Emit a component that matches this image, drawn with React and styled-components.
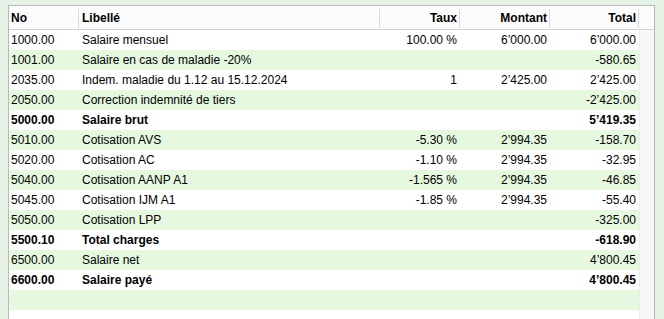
import styled, { createGlobalStyle } from "styled-components";

const Global = createGlobalStyle`
html, body { margin:0; padding:0; }
body {
  background:#e6f1e5;
  font-family:"Liberation Sans", Arial, sans-serif;
  font-size:12px;
  color:#000;
}
`;

const COLS = "70px 301px 80px 90px 89px 16px";

const Page = styled.div`
  width:664px;
  height:319px;
  overflow:hidden;
  padding:5px 9px 0 8px;
  box-sizing:border-box;
`;

const Panel = styled.div`
  background:#fff;
  border:1px solid #b3bcb3;
  border-bottom:none;
  height:330px;
`;

const Header = styled.div`
  display:grid;
  grid-template-columns:${COLS};
  height:23px;
  border-bottom:1px solid #d2d2d2;
  background:#fcfcfc;
`;

const HeadCell = styled.div`
  position:relative;
  font-weight:bold;
  line-height:25px;
  padding:0 ${(p) => (p.$right ? "3px" : "0")} 0 ${(p) => (p.$first ? "2px" : "3px")};
  text-align:${(p) => (p.$right ? "right" : "left")};
  white-space:nowrap;
  &::before {
    content:"";
    display:${(p) => (p.$first ? "none" : "block")};
    position:absolute;
    left:-1px;
    top:3px;
    bottom:3px;
    width:1px;
    background:#d9d9d9;
  }
`;

const Body = styled.div`
  display:flex;
`;

const Rows = styled.div`
  flex:1;
`;

const Track = styled.div`
  width:15px;
  border-left:1px solid #ececec;
  background:#f7f7f7;
  height:300px;
`;

const Row = styled.div`
  display:grid;
  grid-template-columns:70px 301px 80px 90px 89px;
  height:20px;
  line-height:20px;
  background:${(p) => (p.$alt ? "#e6f8df" : "#fff")};
  font-weight:${(p) => (p.$bold ? "bold" : "normal")};
`;

const Cell = styled.div`
  white-space:nowrap;
  overflow:hidden;
  padding:0 ${(p) => (p.$right ? "3px" : "0")} 0 ${(p) => (p.$first ? "2px" : "3px")};
  text-align:${(p) => (p.$right ? "right" : "left")};
`;

const rows = [
  ["1000.00", "Salaire mensuel", "100.00 %", "6’000.00", "6’000.00"],
  ["1001.00", "Salaire en cas de maladie -20%", "", "", "-580.65"],
  ["2035.00", "Indem. maladie du 1.12 au 15.12.2024", "1", "2’425.00", "2’425.00"],
  ["2050.00", "Correction indemnité de tiers", "", "", "-2’425.00"],
  ["5000.00", "Salaire brut", "", "", "5’419.35", true],
  ["5010.00", "Cotisation AVS", "-5.30 %", "2’994.35", "-158.70"],
  ["5020.00", "Cotisation AC", "-1.10 %", "2’994.35", "-32.95"],
  ["5040.00", "Cotisation AANP A1", "-1.565 %", "2’994.35", "-46.85"],
  ["5045.00", "Cotisation IJM A1", "-1.85 %", "2’994.35", "-55.40"],
  ["5050.00", "Cotisation LPP", "", "", "-325.00"],
  ["5500.10", "Total charges", "", "", "-618.90", true],
  ["6500.00", "Salaire net", "", "", "4’800.45"],
  ["6600.00", "Salaire payé", "", "", "4’800.45", true],
  ["", "", "", "", ""],
];

export default function App() {
  return (
    <Page>
      <Global />
      <Panel>
        <Header>
          <HeadCell $first>No</HeadCell>
          <HeadCell>Libellé</HeadCell>
          <HeadCell $right>Taux</HeadCell>
          <HeadCell $right>Montant</HeadCell>
          <HeadCell $right>Total</HeadCell>
          <HeadCell />
        </Header>
        <Body>
          <Rows>
            {rows.map((r, i) => (
              <Row key={i} $alt={i % 2 === 1} $bold={r[5]}>
                <Cell $first>{r[0]}</Cell>
                <Cell>{r[1]}</Cell>
                <Cell $right>{r[2]}</Cell>
                <Cell $right>{r[3]}</Cell>
                <Cell $right>{r[4]}</Cell>
              </Row>
            ))}
          </Rows>
          <Track />
        </Body>
      </Panel>
    </Page>
  );
}
